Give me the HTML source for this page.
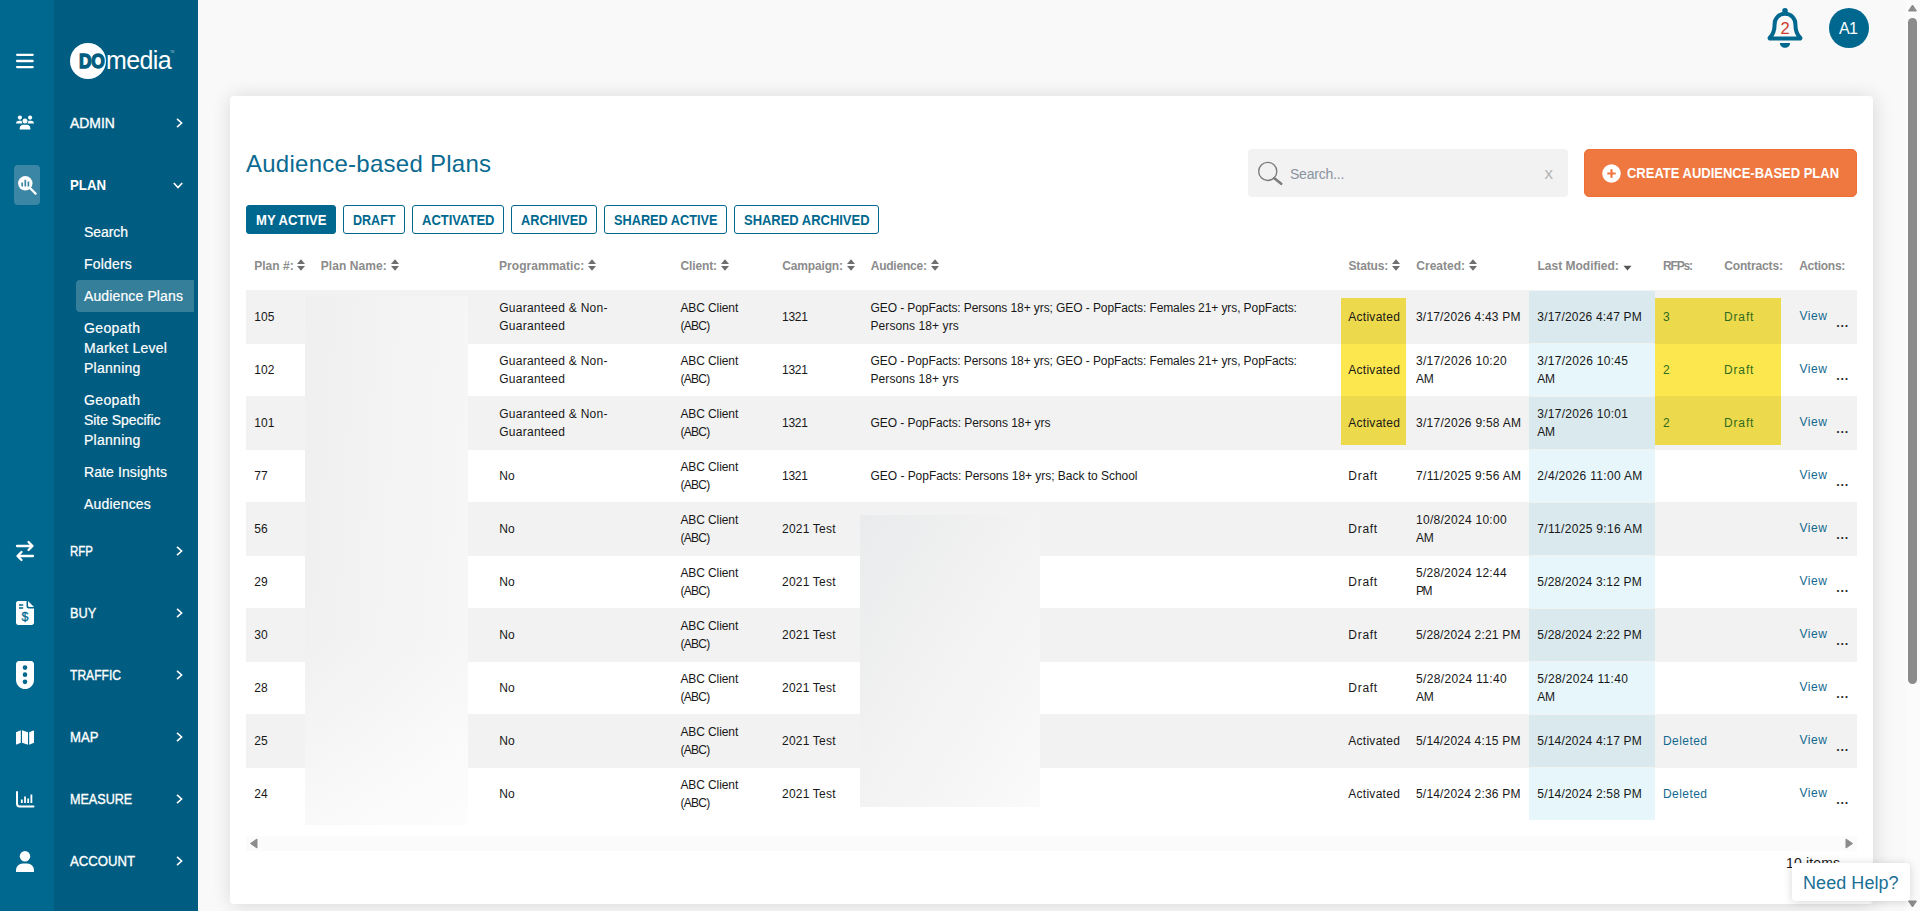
<!DOCTYPE html>
<html lang="en">
<head>
<meta charset="utf-8">
<title>Audience-based Plans</title>
<style>
*{box-sizing:border-box;margin:0;padding:0}
html,body{width:1920px;height:911px;overflow:hidden;background:#f9f9f9;font-family:"Liberation Sans","DejaVu Sans",sans-serif;color:#222}
div,span,a{position:absolute;white-space:nowrap}
svg{position:absolute;overflow:visible}
#strip{left:0;top:0;width:54px;height:911px;background:#00688f}
#panel{left:54px;top:0;width:144px;height:911px;background:#005c80}
.nav{left:70px;color:#fff;font-size:14px;line-height:20px;-webkit-text-stroke:0.35px #fff;transform-origin:0 50%}
.sub{left:84px;color:#fff;font-size:14px;line-height:20px;-webkit-text-stroke:0.2px #fff}
#card{left:230px;top:96px;width:1643px;height:808px;background:#fff;border-radius:4px;box-shadow:1px 1px 20px rgba(0,0,0,0.14)}
#title{left:246px;top:147px;font-size:24px;line-height:34px;color:#0a6a90}
.tab{top:205px;height:29px;border:1px solid #00688f;border-radius:3px;color:#00688f;font-size:14px;font-weight:700;line-height:28.5px;text-align:center}
.tab.on{background:#00688f;color:#fff}
.tabt{top:210px;font-size:14px;font-weight:700;line-height:20px;color:#00688f;transform-origin:0 50%}
.th{top:258px;font-size:12px;font-weight:700;color:#8c8c8c;line-height:16px}
.row{left:246px;width:1611px;height:53px}
.row.g{background:#f2f2f2}
.c{font-size:12px;line-height:18px;color:#181818;letter-spacing:0.16px}
.lnk{color:#13698f}
.grn{color:#2f6b1e}
.dots{font-size:12.5px;font-weight:700;color:#2a2a2a;letter-spacing:0.75px;line-height:18px}
</style>
</head>
<body>
<div id="strip"></div>
<div id="panel"></div>
<svg style="left:16px;top:53px" width="18" height="16" viewBox="0 0 18 16"><path d="M1.1 1.8h15.6M1.1 8h15.6M1.1 14.1h15.6" stroke="#fff" stroke-width="2.3" stroke-linecap="round" fill="none"/></svg>
<svg style="left:16px;top:115px" width="18" height="15" viewBox="0 0 18 15" fill="#fff"><circle cx="3.9" cy="2.6" r="2.1"/><circle cx="14.1" cy="2.6" r="2.1"/><circle cx="9" cy="6.1" r="2.5"/><path d="M0 8.6c0-1.7 1.2-2.9 2.8-2.9h1.6c.5 0 .9.1 1.3.3-.1.9.2 1.9.8 2.6H0z"/><path d="M18 8.6c0-1.7-1.2-2.9-2.8-2.9h-1.6c-.5 0-.9.1-1.3.3.1.9-.2 1.9-.8 2.6H18z"/><path d="M3.7 14.5v-1.2c0-2 1.5-3.5 3.4-3.5h3.8c1.9 0 3.4 1.5 3.4 3.5v1.2z"/></svg>
<div style="left:14px;top:165px;width:26px;height:40px;background:#3a86a4;border-radius:4px"></div>
<svg style="left:17px;top:175px" width="20" height="20" viewBox="0 0 20 20"><circle cx="8.3" cy="8.3" r="7.2" fill="#fff"/><path d="M13.6 13.6l5 5" stroke="#fff" stroke-width="2.2" stroke-linecap="round"/><path d="M5.2 7.6v4M8.3 4.8v6.8M11.4 6.6v5" stroke="#3a86a4" stroke-width="1.7"/></svg>
<svg style="left:16px;top:541px" width="18" height="20" viewBox="0 0 18 20" fill="none" stroke="#fff" stroke-width="2.3" stroke-linecap="round" stroke-linejoin="round"><path d="M1 5h15.5M12.5 1l4 4-4 4M17 15H1.5M5.5 11l-4 4 4 4"/></svg>
<svg style="left:16px;top:601px" width="18" height="24" viewBox="0 0 18 24"><path d="M2.2 0h8.3v5.2c0 1.3 1 2.3 2.3 2.3H18v14.3c0 1.2-1 2.2-2.2 2.2H2.2C1 24 0 23 0 21.8V2.2C0 1 1 0 2.2 0z" fill="#fff"/><path d="M12 0l6 6h-4.8c-.7 0-1.2-.5-1.2-1.2z" fill="#fff"/><path d="M3 4h4.2M3 7h4.2" stroke="#00688f" stroke-width="1.5"/><text x="8.9" y="20" font-family="Liberation Sans,sans-serif" font-size="12.5" fill="#00688f" stroke="#00688f" stroke-width="0.3" text-anchor="middle">$</text></svg>
<svg style="left:16px;top:661px" width="18" height="28" viewBox="0 0 18 27" preserveAspectRatio="none"><path d="M3 0h12c1.7 0 3 1.3 3 3v15c0 5-4 9-9 9s-9-4-9-9V3c0-1.7 1.3-3 3-3z" fill="#fff"/><circle cx="9" cy="6.3" r="2.3" fill="#00688f"/><circle cx="9" cy="13.2" r="2.3" fill="#00688f"/><circle cx="9" cy="20.1" r="2.3" fill="#00688f"/></svg>
<svg style="left:16px;top:729.5px" width="18" height="15" viewBox="0 0 18 15" fill="#fff"><path d="M0 2.2L4.8 .3v12.5L.7 14.5c-.3.1-.7-.1-.7-.5z"/><path d="M6 .2l6 2v12.5l-6-2z"/><path d="M13.2 2.2L17.3.5c.3-.1.7.1.7.5v11.8l-4.8 1.9z"/></svg>
<svg style="left:16px;top:791.5px" width="18" height="16" viewBox="0 0 18 16" fill="none" stroke="#fff"><path d="M1 0v11.8c0 1.5 1.2 2.7 2.7 2.7H17.5" stroke-width="2" stroke-linecap="round"/><path d="M5.8 11V7.5M9 11V4.5M12.2 11V6.5M15.4 11V2.5" stroke-width="1.8"/></svg>
<svg style="left:16px;top:851px" width="18" height="21" viewBox="0 0 18 21" fill="#fff"><circle cx="9" cy="5.2" r="5.2"/><path d="M0 21v-1.5c0-3.9 3-7 6.8-7h4.4c3.8 0 6.8 3.1 6.8 7V21z"/></svg>
<div style="left:69.8px;top:42.9px;width:36px;height:36px;border-radius:50%;background:#fff"></div>
<div style="left:78.6px;top:46.2px;font-size:20px;line-height:30px;font-weight:700;color:#005c80;letter-spacing:-0.4px;-webkit-text-stroke:1.3px #005c80;transform:scaleX(0.87);transform-origin:0 0">DO</div>
<div style="left:106px;top:44.7px;font-size:25px;line-height:30px;color:#fff;letter-spacing:-0.6px">media</div>
<div style="left:170px;top:49.5px;font-size:3px;line-height:4px;color:#9fc3d2">TM</div>
<div class="nav" style="top:113px;transform:scaleX(0.9931)">ADMIN</div>
<svg style="left:176px;top:118px" width="7" height="10" viewBox="0 0 7 10" fill="none" stroke="#fff" stroke-width="1.6"><path d="M1 .8l4.6 4.2L1 9.2"/></svg>
<div class="nav" style="top:175px;font-weight:700;-webkit-text-stroke:0;transform:scaleX(0.9446)">PLAN</div>
<svg style="left:173.3px;top:181.7px" width="10" height="7" viewBox="0 0 10 7" fill="none" stroke="#fff" stroke-width="1.6"><path d="M.8 1l4.2 4.6L9.2 1"/></svg>
<div class="nav" style="top:541px;transform:scaleX(0.8214)">RFP</div>
<svg style="left:176px;top:546px" width="7" height="10" viewBox="0 0 7 10" fill="none" stroke="#fff" stroke-width="1.6"><path d="M1 .8l4.6 4.2L1 9.2"/></svg>
<div class="nav" style="top:603px;transform:scaleX(0.9102)">BUY</div>
<svg style="left:176px;top:608px" width="7" height="10" viewBox="0 0 7 10" fill="none" stroke="#fff" stroke-width="1.6"><path d="M1 .8l4.6 4.2L1 9.2"/></svg>
<div class="nav" style="top:665px;transform:scaleX(0.8629)">TRAFFIC</div>
<svg style="left:176px;top:670px" width="7" height="10" viewBox="0 0 7 10" fill="none" stroke="#fff" stroke-width="1.6"><path d="M1 .8l4.6 4.2L1 9.2"/></svg>
<div class="nav" style="top:727px;transform:scaleX(0.9361)">MAP</div>
<svg style="left:176px;top:732px" width="7" height="10" viewBox="0 0 7 10" fill="none" stroke="#fff" stroke-width="1.6"><path d="M1 .8l4.6 4.2L1 9.2"/></svg>
<div class="nav" style="top:789px;transform:scaleX(0.8984)">MEASURE</div>
<svg style="left:176px;top:794px" width="7" height="10" viewBox="0 0 7 10" fill="none" stroke="#fff" stroke-width="1.6"><path d="M1 .8l4.6 4.2L1 9.2"/></svg>
<div class="nav" style="top:851px;transform:scaleX(0.939)">ACCOUNT</div>
<svg style="left:176px;top:856px" width="7" height="10" viewBox="0 0 7 10" fill="none" stroke="#fff" stroke-width="1.6"><path d="M1 .8l4.6 4.2L1 9.2"/></svg>
<div style="left:76px;top:280px;width:118px;height:32px;background:#367f9b;border-radius:4px 0 0 4px"></div>
<div class="sub" style="top:222px;letter-spacing:-0.072px">Search</div>
<div class="sub" style="top:254px;letter-spacing:0.186px">Folders</div>
<div class="sub" style="top:286px;letter-spacing:0.124px">Audience Plans</div>
<div class="sub" style="top:318px;letter-spacing:0.382px">Geopath</div>
<div class="sub" style="top:338px;letter-spacing:0.251px">Market Level</div>
<div class="sub" style="top:358px;letter-spacing:0.273px">Planning</div>
<div class="sub" style="top:390px;letter-spacing:0.382px">Geopath</div>
<div class="sub" style="top:410px;letter-spacing:-0.044px">Site Specific</div>
<div class="sub" style="top:430px;letter-spacing:0.273px">Planning</div>
<div class="sub" style="top:462px;letter-spacing:0.099px">Rate Insights</div>
<div class="sub" style="top:494px;letter-spacing:0.178px">Audiences</div>
<svg style="left:1767px;top:8px" width="36" height="40" viewBox="0 0 36 40"><circle cx="18" cy="2.8" r="2.8" fill="#00688f"/><path d="M18 5.85C11.8 5.85 7.6 10.3 7.6 16.4C7.6 22.6 6.2 26.2 3 29.4C2.2 30.2 2.7 30.6 3.6 30.6H32.4C33.3 30.6 33.8 30.2 33 29.4C29.8 26.2 28.4 22.6 28.4 16.4C28.4 10.3 24.2 5.85 18 5.85Z" fill="none" stroke="#00688f" stroke-width="4" stroke-linejoin="round"/><path d="M12.9 35h10.2c0 2.7-2.3 4.8-5.1 4.8s-5.1-2.1-5.1-4.8z" fill="#00688f"/></svg>
<div style="left:1775px;top:16.5px;width:20px;text-align:center;font-size:16.5px;line-height:22px;color:#cc3b2c">2</div>
<div style="left:1828.5px;top:8px;width:40px;height:40px;border-radius:50%;background:#00688f;color:#fff;font-size:16px;line-height:41.5px;text-align:center;letter-spacing:-0.7px;text-indent:-0.7px">A1</div>
<div style="left:1905px;top:0;width:15px;height:911px;background:#fbfbfb"></div>
<svg style="left:1908px;top:4px" width="9" height="8" viewBox="0 0 9 8"><path d="M4.5 1L8.5 7H.5z" fill="#8b8b8b" stroke="#8b8b8b" stroke-width="1" stroke-linejoin="round"/></svg>
<svg style="left:1908px;top:899.7px" width="9" height="8" viewBox="0 0 9 8"><path d="M4.5 7L8.5 1H.5z" fill="#8b8b8b" stroke="#8b8b8b" stroke-width="1" stroke-linejoin="round"/></svg>
<div style="left:1908px;top:18px;width:9px;height:666px;background:#8b8b8b;border-radius:4.5px"></div>
<div id="card"></div>
<div id="title" style="letter-spacing:0.254px">Audience-based Plans</div>
<div style="left:1248px;top:149px;width:320px;height:47.5px;background:#f2f2f2;border-radius:4px"></div>
<svg style="left:1257px;top:161px" width="26" height="26" viewBox="0 0 26 26" fill="none" stroke="#7d7d7d"><circle cx="10.75" cy="10.4" r="9.05" stroke-width="1.4"/><path d="M17.3 17.3L24.2 22.7" stroke-width="2.7" stroke-linecap="round"/></svg>
<div style="left:1290px;top:163.7px;font-size:14px;line-height:20px;color:#8a93a0;letter-spacing:-0.216px">Search...</div>
<div style="left:1544.5px;top:163.7px;font-size:17px;line-height:20px;color:#b5b5b5">x</div>
<div style="left:1584px;top:149px;width:273px;height:47.5px;background:#ef7840;border:1px solid #ee6f34;border-radius:5px"></div>
<svg style="left:1602px;top:163.5px" width="19" height="19" viewBox="0 0 19 19"><circle cx="9.5" cy="9.5" r="9.3" fill="#fff"/><path d="M9.5 5.3v8.4M5.3 9.5h8.4" stroke="#ee7740" stroke-width="2.2"/></svg>
<div style="left:1626.7px;top:163px;font-size:14px;font-weight:700;line-height:20px;color:#fff;transform:scaleX(0.9271);transform-origin:0 50%">CREATE AUDIENCE-BASED PLAN</div>
<div class="tab on" style="left:246px;width:90px"></div>
<div class="tabt" style="left:255.75px;transform:scaleX(0.9343);color:#fff">MY ACTIVE</div>
<div class="tab" style="left:343px;width:62px"></div>
<div class="tabt" style="left:352.75px;transform:scaleX(0.8959)">DRAFT</div>
<div class="tab" style="left:412px;width:92px"></div>
<div class="tabt" style="left:421.75px;transform:scaleX(0.9291)">ACTIVATED</div>
<div class="tab" style="left:511px;width:86px"></div>
<div class="tabt" style="left:520.75px;transform:scaleX(0.9095)">ARCHIVED</div>
<div class="tab" style="left:604px;width:123px"></div>
<div class="tabt" style="left:613.75px;transform:scaleX(0.9093)">SHARED ACTIVE</div>
<div class="tab" style="left:734px;width:145px"></div>
<div class="tabt" style="left:743.75px;transform:scaleX(0.9255)">SHARED ARCHIVED</div>
<div class="th" style="left:254.2px;letter-spacing:0.042px">Plan #:</div>
<svg style="left:297px;top:259.3px" width="8" height="12" viewBox="0 0 8 12" fill="#6e6e6e"><path d="M4 .3L8 5H0z"/><path d="M4 11.7L8 7H0z"/></svg>
<div class="th" style="left:320.8px;letter-spacing:0.072px">Plan Name:</div>
<svg style="left:391px;top:259.3px" width="8" height="12" viewBox="0 0 8 12" fill="#6e6e6e"><path d="M4 .3L8 5H0z"/><path d="M4 11.7L8 7H0z"/></svg>
<div class="th" style="left:499px;letter-spacing:0.042px">Programmatic:</div>
<svg style="left:587.5px;top:259.3px" width="8" height="12" viewBox="0 0 8 12" fill="#6e6e6e"><path d="M4 .3L8 5H0z"/><path d="M4 11.7L8 7H0z"/></svg>
<div class="th" style="left:680.6px;letter-spacing:-0.155px">Client:</div>
<svg style="left:721px;top:259.3px" width="8" height="12" viewBox="0 0 8 12" fill="#6e6e6e"><path d="M4 .3L8 5H0z"/><path d="M4 11.7L8 7H0z"/></svg>
<div class="th" style="left:782.2px;letter-spacing:-0.15px">Campaign:</div>
<svg style="left:846.7px;top:259.3px" width="8" height="12" viewBox="0 0 8 12" fill="#6e6e6e"><path d="M4 .3L8 5H0z"/><path d="M4 11.7L8 7H0z"/></svg>
<div class="th" style="left:870.7px;letter-spacing:-0.213px">Audience:</div>
<svg style="left:931px;top:259.3px" width="8" height="12" viewBox="0 0 8 12" fill="#6e6e6e"><path d="M4 .3L8 5H0z"/><path d="M4 11.7L8 7H0z"/></svg>
<div class="th" style="left:1348.5px;letter-spacing:-0.162px">Status:</div>
<svg style="left:1392px;top:259.3px" width="8" height="12" viewBox="0 0 8 12" fill="#6e6e6e"><path d="M4 .3L8 5H0z"/><path d="M4 11.7L8 7H0z"/></svg>
<div class="th" style="left:1416.3px;letter-spacing:0.017px">Created:</div>
<svg style="left:1469.2px;top:259.3px" width="8" height="12" viewBox="0 0 8 12" fill="#6e6e6e"><path d="M4 .3L8 5H0z"/><path d="M4 11.7L8 7H0z"/></svg>
<div class="th" style="left:1537.5px;letter-spacing:-0.002px">Last Modified:</div>
<div class="th" style="left:1663px;letter-spacing:-1.168px">RFPs:</div>
<div class="th" style="left:1724.2px;letter-spacing:-0.134px">Contracts:</div>
<div class="th" style="left:1799.2px;letter-spacing:-0.271px">Actions:</div>
<svg style="left:1622.5px;top:264.5px" width="9" height="6" viewBox="0 0 9 6"><path d="M.5 .8h8L4.5 5.4z" fill="#555"/></svg>
<div style="left:246px;top:290px;width:1611px;height:1px;background:#f2f2f2"></div>
<div style="left:246px;top:343px;width:1611px;height:1px;background:#f2f2f2"></div>
<div style="left:246px;top:396px;width:1611px;height:1px;background:#f2f2f2"></div>
<div style="left:246px;top:449px;width:1611px;height:1px;background:#f2f2f2"></div>
<div style="left:246px;top:502px;width:1611px;height:1px;background:#f2f2f2"></div>
<div style="left:246px;top:555px;width:1611px;height:1px;background:#f2f2f2"></div>
<div style="left:246px;top:608px;width:1611px;height:1px;background:#f2f2f2"></div>
<div style="left:246px;top:661px;width:1611px;height:1px;background:#f2f2f2"></div>
<div style="left:246px;top:714px;width:1611px;height:1px;background:#f2f2f2"></div>
<div style="left:246px;top:767px;width:1611px;height:1px;background:#f2f2f2"></div>
<div class="row g" style="top:291px;height:52px"></div>
<div class="row g" style="top:397px;height:52px"></div>
<div class="row g" style="top:503px;height:52px"></div>
<div class="row g" style="top:609px;height:52px"></div>
<div class="row g" style="top:715px;height:52px"></div>
<div style="left:1529px;top:291px;width:126px;height:52px;background:#dae9ee"></div>
<div style="left:1529px;top:344px;width:126px;height:52px;background:#e6f6fb"></div>
<div style="left:1529px;top:397px;width:126px;height:52px;background:#dae9ee"></div>
<div style="left:1529px;top:450px;width:126px;height:52px;background:#e6f6fb"></div>
<div style="left:1529px;top:503px;width:126px;height:52px;background:#dae9ee"></div>
<div style="left:1529px;top:556px;width:126px;height:52px;background:#e6f6fb"></div>
<div style="left:1529px;top:609px;width:126px;height:52px;background:#dae9ee"></div>
<div style="left:1529px;top:662px;width:126px;height:52px;background:#e6f6fb"></div>
<div style="left:1529px;top:715px;width:126px;height:52px;background:#dae9ee"></div>
<div style="left:1529px;top:768px;width:126px;height:52px;background:#e6f6fb"></div>
<div style="left:1341px;top:298px;width:65px;height:46px;background:#ecd94c"></div>
<div style="left:1655px;top:298px;width:126px;height:46px;background:#ecd94c"></div>
<div style="left:1341px;top:344px;width:65px;height:52px;background:#fde74f"></div>
<div style="left:1655px;top:344px;width:126px;height:52px;background:#fde74f"></div>
<div style="left:1341px;top:396px;width:65px;height:48.5px;background:#ecd94c"></div>
<div style="left:1655px;top:396px;width:126px;height:48.5px;background:#ecd94c"></div>
<div class="c" style="left:254.3px;top:307.6px;letter-spacing:0.1px">105</div>
<div class="c" style="left:499.2px;top:298.6px;letter-spacing:0.265px">Guaranteed &amp; Non-</div>
<div class="c" style="left:499.2px;top:316.6px;letter-spacing:0.269px">Guaranteed</div>
<div class="c" style="left:680.4px;top:298.6px;letter-spacing:-0.088px">ABC Client</div>
<div class="c" style="left:680.4px;top:316.6px;letter-spacing:-0.717px">(ABC)</div>
<div class="c" style="left:782px;top:307.6px;letter-spacing:-0.298px">1321</div>
<div class="c" style="left:870.5px;top:298.6px;letter-spacing:-0.086px">GEO - PopFacts: Persons 18+ yrs; GEO - PopFacts: Females 21+ yrs, PopFacts:</div>
<div class="c" style="left:870.5px;top:316.6px;letter-spacing:0.086px">Persons 18+ yrs</div>
<div class="c" style="left:1348.3px;top:307.6px;letter-spacing:0.268px">Activated</div>
<div class="c" style="left:1416px;top:307.6px;letter-spacing:0.187px">3/17/2026 4:43 PM</div>
<div class="c" style="left:1537.3px;top:307.6px;letter-spacing:0.187px">3/17/2026 4:47 PM</div>
<div class="c grn" style="left:1663px;top:307.6px;letter-spacing:0.1px">3</div>
<div class="c grn" style="left:1724px;top:307.6px;letter-spacing:0.724px;letter-spacing:0.85px">Draft</div>
<div class="c lnk" style="left:1799.4px;top:306.6px;letter-spacing:0.536px">View</div>
<div class="dots" style="left:1836.3px;top:314.40000000000003px">...</div>
<div class="c" style="left:254.3px;top:360.6px;letter-spacing:0.1px">102</div>
<div class="c" style="left:499.2px;top:351.6px;letter-spacing:0.265px">Guaranteed &amp; Non-</div>
<div class="c" style="left:499.2px;top:369.6px;letter-spacing:0.269px">Guaranteed</div>
<div class="c" style="left:680.4px;top:351.6px;letter-spacing:-0.088px">ABC Client</div>
<div class="c" style="left:680.4px;top:369.6px;letter-spacing:-0.717px">(ABC)</div>
<div class="c" style="left:782px;top:360.6px;letter-spacing:-0.298px">1321</div>
<div class="c" style="left:870.5px;top:351.6px;letter-spacing:-0.086px">GEO - PopFacts: Persons 18+ yrs; GEO - PopFacts: Females 21+ yrs, PopFacts:</div>
<div class="c" style="left:870.5px;top:369.6px;letter-spacing:0.086px">Persons 18+ yrs</div>
<div class="c" style="left:1348.3px;top:360.6px;letter-spacing:0.268px">Activated</div>
<div class="c" style="left:1416px;top:351.6px;letter-spacing:0.275px">3/17/2026 10:20</div>
<div class="c" style="left:1416px;top:369.6px;letter-spacing:-0.202px">AM</div>
<div class="c" style="left:1537.3px;top:351.6px;letter-spacing:0.275px">3/17/2026 10:45</div>
<div class="c" style="left:1537.3px;top:369.6px;letter-spacing:-0.202px">AM</div>
<div class="c grn" style="left:1663px;top:360.6px;letter-spacing:0.1px">2</div>
<div class="c grn" style="left:1724px;top:360.6px;letter-spacing:0.724px;letter-spacing:0.85px">Draft</div>
<div class="c lnk" style="left:1799.4px;top:359.6px;letter-spacing:0.536px">View</div>
<div class="dots" style="left:1836.3px;top:367.40000000000003px">...</div>
<div class="c" style="left:254.3px;top:413.6px;letter-spacing:0.1px">101</div>
<div class="c" style="left:499.2px;top:404.6px;letter-spacing:0.265px">Guaranteed &amp; Non-</div>
<div class="c" style="left:499.2px;top:422.6px;letter-spacing:0.269px">Guaranteed</div>
<div class="c" style="left:680.4px;top:404.6px;letter-spacing:-0.088px">ABC Client</div>
<div class="c" style="left:680.4px;top:422.6px;letter-spacing:-0.717px">(ABC)</div>
<div class="c" style="left:782px;top:413.6px;letter-spacing:-0.298px">1321</div>
<div class="c" style="left:870.5px;top:413.6px;letter-spacing:-0.058px">GEO - PopFacts: Persons 18+ yrs</div>
<div class="c" style="left:1348.3px;top:413.6px;letter-spacing:0.268px">Activated</div>
<div class="c" style="left:1416px;top:413.6px;letter-spacing:0.266px">3/17/2026 9:58 AM</div>
<div class="c" style="left:1537.3px;top:404.6px;letter-spacing:0.275px">3/17/2026 10:01</div>
<div class="c" style="left:1537.3px;top:422.6px;letter-spacing:-0.202px">AM</div>
<div class="c grn" style="left:1663px;top:413.6px;letter-spacing:0.1px">2</div>
<div class="c grn" style="left:1724px;top:413.6px;letter-spacing:0.724px;letter-spacing:0.85px">Draft</div>
<div class="c lnk" style="left:1799.4px;top:412.6px;letter-spacing:0.536px">View</div>
<div class="dots" style="left:1836.3px;top:420.40000000000003px">...</div>
<div class="c" style="left:254.3px;top:466.6px;letter-spacing:0.1px">77</div>
<div class="c" style="left:499.2px;top:466.6px;letter-spacing:0.1px">No</div>
<div class="c" style="left:680.4px;top:457.6px;letter-spacing:-0.088px">ABC Client</div>
<div class="c" style="left:680.4px;top:475.6px;letter-spacing:-0.717px">(ABC)</div>
<div class="c" style="left:782px;top:466.6px;letter-spacing:-0.298px">1321</div>
<div class="c" style="left:870.5px;top:466.6px;letter-spacing:-0.032px">GEO - PopFacts: Persons 18+ yrs; Back to School</div>
<div class="c" style="left:1348.3px;top:466.6px;letter-spacing:0.724px">Draft</div>
<div class="c" style="left:1416px;top:466.6px;letter-spacing:0.322px">7/11/2025 9:56 AM</div>
<div class="c" style="left:1537.3px;top:466.6px;letter-spacing:0.322px">2/4/2026 11:00 AM</div>
<div class="c lnk" style="left:1799.4px;top:465.6px;letter-spacing:0.536px">View</div>
<div class="dots" style="left:1836.3px;top:473.40000000000003px">...</div>
<div class="c" style="left:254.3px;top:519.6px;letter-spacing:0.1px">56</div>
<div class="c" style="left:499.2px;top:519.6px;letter-spacing:0.1px">No</div>
<div class="c" style="left:680.4px;top:510.6px;letter-spacing:-0.088px">ABC Client</div>
<div class="c" style="left:680.4px;top:528.6px;letter-spacing:-0.717px">(ABC)</div>
<div class="c" style="left:782px;top:519.6px;letter-spacing:0.21px">2021 Test</div>
<div class="c" style="left:1348.3px;top:519.6px;letter-spacing:0.724px">Draft</div>
<div class="c" style="left:1416px;top:510.6px;letter-spacing:0.275px">10/8/2024 10:00</div>
<div class="c" style="left:1416px;top:528.6px;letter-spacing:-0.202px">AM</div>
<div class="c" style="left:1537.3px;top:519.6px;letter-spacing:0.322px">7/11/2025 9:16 AM</div>
<div class="c lnk" style="left:1799.4px;top:518.6px;letter-spacing:0.536px">View</div>
<div class="dots" style="left:1836.3px;top:526.4px">...</div>
<div class="c" style="left:254.3px;top:572.6px;letter-spacing:0.1px">29</div>
<div class="c" style="left:499.2px;top:572.6px;letter-spacing:0.1px">No</div>
<div class="c" style="left:680.4px;top:563.6px;letter-spacing:-0.088px">ABC Client</div>
<div class="c" style="left:680.4px;top:581.6px;letter-spacing:-0.717px">(ABC)</div>
<div class="c" style="left:782px;top:572.6px;letter-spacing:0.21px">2021 Test</div>
<div class="c" style="left:1348.3px;top:572.6px;letter-spacing:0.724px">Draft</div>
<div class="c" style="left:1416px;top:563.6px;letter-spacing:0.275px">5/28/2024 12:44</div>
<div class="c" style="left:1416px;top:581.6px;letter-spacing:-1.402px">PM</div>
<div class="c" style="left:1537.3px;top:572.6px;letter-spacing:0.187px">5/28/2024 3:12 PM</div>
<div class="c lnk" style="left:1799.4px;top:571.6px;letter-spacing:0.536px">View</div>
<div class="dots" style="left:1836.3px;top:579.4px">...</div>
<div class="c" style="left:254.3px;top:625.6px;letter-spacing:0.1px">30</div>
<div class="c" style="left:499.2px;top:625.6px;letter-spacing:0.1px">No</div>
<div class="c" style="left:680.4px;top:616.6px;letter-spacing:-0.088px">ABC Client</div>
<div class="c" style="left:680.4px;top:634.6px;letter-spacing:-0.717px">(ABC)</div>
<div class="c" style="left:782px;top:625.6px;letter-spacing:0.21px">2021 Test</div>
<div class="c" style="left:1348.3px;top:625.6px;letter-spacing:0.724px">Draft</div>
<div class="c" style="left:1416px;top:625.6px;letter-spacing:0.187px">5/28/2024 2:21 PM</div>
<div class="c" style="left:1537.3px;top:625.6px;letter-spacing:0.187px">5/28/2024 2:22 PM</div>
<div class="c lnk" style="left:1799.4px;top:624.6px;letter-spacing:0.536px">View</div>
<div class="dots" style="left:1836.3px;top:632.4px">...</div>
<div class="c" style="left:254.3px;top:678.6px;letter-spacing:0.1px">28</div>
<div class="c" style="left:499.2px;top:678.6px;letter-spacing:0.1px">No</div>
<div class="c" style="left:680.4px;top:669.6px;letter-spacing:-0.088px">ABC Client</div>
<div class="c" style="left:680.4px;top:687.6px;letter-spacing:-0.717px">(ABC)</div>
<div class="c" style="left:782px;top:678.6px;letter-spacing:0.21px">2021 Test</div>
<div class="c" style="left:1348.3px;top:678.6px;letter-spacing:0.724px">Draft</div>
<div class="c" style="left:1416px;top:669.6px;letter-spacing:0.339px">5/28/2024 11:40</div>
<div class="c" style="left:1416px;top:687.6px;letter-spacing:-0.202px">AM</div>
<div class="c" style="left:1537.3px;top:669.6px;letter-spacing:0.339px">5/28/2024 11:40</div>
<div class="c" style="left:1537.3px;top:687.6px;letter-spacing:-0.202px">AM</div>
<div class="c lnk" style="left:1799.4px;top:677.6px;letter-spacing:0.536px">View</div>
<div class="dots" style="left:1836.3px;top:685.4px">...</div>
<div class="c" style="left:254.3px;top:731.6px;letter-spacing:0.1px">25</div>
<div class="c" style="left:499.2px;top:731.6px;letter-spacing:0.1px">No</div>
<div class="c" style="left:680.4px;top:722.6px;letter-spacing:-0.088px">ABC Client</div>
<div class="c" style="left:680.4px;top:740.6px;letter-spacing:-0.717px">(ABC)</div>
<div class="c" style="left:782px;top:731.6px;letter-spacing:0.21px">2021 Test</div>
<div class="c" style="left:1348.3px;top:731.6px;letter-spacing:0.268px">Activated</div>
<div class="c" style="left:1416px;top:731.6px;letter-spacing:0.187px">5/14/2024 4:15 PM</div>
<div class="c" style="left:1537.3px;top:731.6px;letter-spacing:0.187px">5/14/2024 4:17 PM</div>
<div class="c lnk" style="left:1663px;top:731.6px;letter-spacing:0.44px">Deleted</div>
<div class="c lnk" style="left:1799.4px;top:730.6px;letter-spacing:0.536px">View</div>
<div class="dots" style="left:1836.3px;top:738.4px">...</div>
<div class="c" style="left:254.3px;top:784.6px;letter-spacing:0.1px">24</div>
<div class="c" style="left:499.2px;top:784.6px;letter-spacing:0.1px">No</div>
<div class="c" style="left:680.4px;top:775.6px;letter-spacing:-0.088px">ABC Client</div>
<div class="c" style="left:680.4px;top:793.6px;letter-spacing:-0.717px">(ABC)</div>
<div class="c" style="left:782px;top:784.6px;letter-spacing:0.21px">2021 Test</div>
<div class="c" style="left:1348.3px;top:784.6px;letter-spacing:0.268px">Activated</div>
<div class="c" style="left:1416px;top:784.6px;letter-spacing:0.187px">5/14/2024 2:36 PM</div>
<div class="c" style="left:1537.3px;top:784.6px;letter-spacing:0.187px">5/14/2024 2:58 PM</div>
<div class="c lnk" style="left:1663px;top:784.6px;letter-spacing:0.44px">Deleted</div>
<div class="c lnk" style="left:1799.4px;top:783.6px;letter-spacing:0.536px">View</div>
<div class="dots" style="left:1836.3px;top:791.4px">...</div>
<div style="left:305px;top:296px;width:163px;height:529px;background:linear-gradient(to right,rgba(0,0,0,0.012),rgba(255,255,255,0.3)),linear-gradient(to bottom,#f2f2f2 0%,#f3f3f3 65%,#fcfcfc 100%)"></div>
<div style="left:860px;top:515px;width:180px;height:292px;background:linear-gradient(to bottom right,#e9ebec 0%,#f1f1f1 40%,#fafafa 100%)"></div>
<div style="left:246px;top:836px;width:1611px;height:15px;background:#fbfbfb"></div>
<svg style="left:249px;top:838px" width="9" height="11" viewBox="0 0 9 11"><path d="M8 1v9L1.5 5.5z" fill="#8b8b8b" stroke="#8b8b8b" stroke-linejoin="round"/></svg>
<svg style="left:1844.5px;top:838px" width="9" height="11" viewBox="0 0 9 11"><path d="M1 1v9L7.5 5.5z" fill="#8b8b8b" stroke="#8b8b8b" stroke-linejoin="round"/></svg>
<div class="c" style="left:1786px;top:853.5px;font-size:14px;letter-spacing:0.156px">10 items</div>
<div style="left:1792px;top:863px;width:118px;height:38px;background:#fff;border-radius:4px;box-shadow:0 1px 10px rgba(0,0,0,0.16)"></div>
<div style="left:1803px;top:870.6px;font-size:18px;line-height:24px;color:#1a6f95;letter-spacing:0.06px">Need Help?</div>
</body>
</html>
